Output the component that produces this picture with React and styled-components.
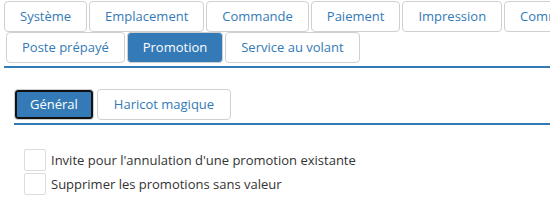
import React from "react";
import styled, { createGlobalStyle } from "styled-components";

const Global = createGlobalStyle`
  html, body { margin: 0; padding: 0; background: #fff; overflow: hidden; }
  body { font-family: "Open Sans", "Noto Sans", sans-serif; font-size: 13px; color: #333; }
`;

const Page = styled.div`
  width: 700px;
  padding-top: 1px;
`;

const Nav = styled.div`
  margin-left: 4px;
  display: flex;
  flex-direction: column;
`;

const TabRow = styled.div`
  display: flex;
  gap: ${(p) => p.$gap || 2}px;
  padding-left: ${(p) => p.$indent || 0}px;
`;

const Tab = styled.button`
  box-sizing: border-box;
  height: 31px;
  padding: 0 ${(p) => p.$pad || 15}px;
  border: 1px solid #d0d0d0;
  border-radius: 4px;
  background: ${(p) => (p.$active ? "#337ab7" : "#fff")};
  color: ${(p) => (p.$active ? "#fff" : "#337ab7")};
  font-family: inherit;
  font-size: 13px;
  line-height: 29px;
  white-space: nowrap;
  cursor: pointer;
  ${(p) => p.$focus && "box-shadow: inset 0 0 0 2px #111;"}
`;

const Divider = styled.div`
  height: 2px;
  background: #337ab7;
  margin-top: ${(p) => p.$top}px;
`;

const SubSection = styled.div`
  padding: 21px 0 0 14px;
`;

const Options = styled.div`
  display: flex;
  flex-direction: column;
  gap: 2px;
  padding: 24px 0 0 24px;
`;

const Option = styled.label`
  display: flex;
  align-items: center;
  gap: 5px;
  color: #333;
  font-size: 13px;
`;

const Box = styled.span`
  box-sizing: border-box;
  width: 22px;
  height: 22px;
  border: 1px solid #dcdcdc;
  border-radius: 2px;
  background: #fff;
`;

export default function App() {
  return (
    <Page>
      <Global />
      <Nav>
        <TabRow>
          <Tab>Système</Tab>
          <Tab>Emplacement</Tab>
          <Tab>Commande</Tab>
          <Tab>Paiement</Tab>
          <Tab>Impression</Tab>
          <Tab>Communication</Tab>
        </TabRow>
        <TabRow $indent={2}>
          <Tab>Poste prépayé</Tab>
          <Tab $active>Promotion</Tab>
          <Tab>Service au volant</Tab>
        </TabRow>
        <Divider $top={3} />
      </Nav>
      <SubSection>
        <TabRow $gap={3}>
          <Tab $active $focus>Général</Tab>
          <Tab $pad={16}>Haricot magique</Tab>
        </TabRow>
        <Divider $top={3} />
      </SubSection>
      <Options>
        <Option>
          <Box />
          Invite pour l'annulation d'une promotion existante
        </Option>
        <Option>
          <Box />
          Supprimer les promotions sans valeur
        </Option>
      </Options>
    </Page>
  );
}
